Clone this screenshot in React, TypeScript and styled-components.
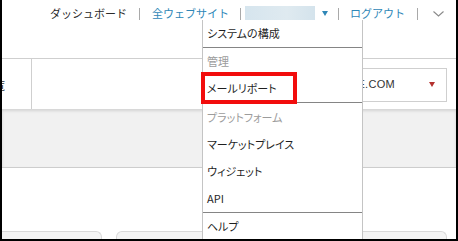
import React from "react";
import styled, { createGlobalStyle } from "styled-components";

const Global = createGlobalStyle`
  html, body { margin: 0; padding: 0; background: #fff; }
  body { font-family: "Noto Sans CJK JP", "Noto Sans", sans-serif; }
`;

const Frame = styled.div`
  position: relative;
  width: 458px;
  height: 241px;
  box-sizing: border-box;
  border-left: 2px solid #000;
  border-right: 2px solid #000;
  border-bottom: 2px solid #000;
  overflow: hidden;
  display: flex;
  flex-direction: column;
  background: #fff;
`;

const Header = styled.div`
  height: 58px;
  flex: none;
  border-bottom: 1px solid #cfcfcf;
  position: relative;
`;

const Nav = styled.nav`
  height: 26px;
  display: flex;
  align-items: center;
  padding-left: 48px;
  font-size: 11px;
  line-height: 1;
  white-space: nowrap;
`;

const NavText = styled.span<{ $link?: boolean }>`
  color: ${(p) => (p.$link ? "#2f87b7" : "#2b2b2b")};
`;

const Sep = styled.span<{ $l: number; $r: number }>`
  width: 1px;
  height: 12px;
  background: #a9a9a9;
  margin: 1px ${(p) => p.$r}px 0 ${(p) => p.$l}px;
`;

const Blurred = styled.span`
  width: 70px;
  height: 16px;
  margin-top: 2px;
  background: linear-gradient(90deg, #d6e5ee, #dfeaf0 60%, #d4e3ec);
  filter: blur(0.6px);
`;

const Caret = styled.span<{ $color: string }>`
  flex: none;
  width: 0;
  height: 0;
  border-left: 3.5px solid transparent;
  border-right: 3.5px solid transparent;
  border-top: 5px solid ${(p) => p.$color};
`;

const NavCaret = styled(Caret)`
  margin: 0 10px 0 7px;
`;

const Chevron = styled.svg`
  margin-left: 15px;
  margin-top: 1px;
`;

const Menu = styled.div`
  position: absolute;
  left: 200px;
  top: 20px;
  width: 161px;
  height: 240px;
  box-sizing: border-box;
  background: #fff;
  border-left: 1px solid #c4c4c4;
  border-right: 1px solid #c4c4c4;
  z-index: 5;
  font-size: 11px;
  font-feature-settings: "palt";
  line-height: 1;
`;

const MenuItem = styled.div<{ $group?: boolean; $h?: number }>`
  position: relative;
  height: ${(p) => p.$h ?? 27}px;
  display: flex;
  align-items: center;
  padding-left: 4px;
  color: ${(p) => (p.$group ? "#9c9c9c" : "#1f1f1f")};
  white-space: nowrap;
`;

const MenuSep = styled.div`
  height: 1px;
  background: #858585;
`;

const Highlight = styled.div`
  position: absolute;
  left: -2px;
  top: -3px;
  width: 96px;
  height: 32px;
  box-sizing: border-box;
  border: 4px solid #f20d0d;
`;

const Toolbar = styled.div`
  height: 50px;
  flex: none;
  display: flex;
  align-items: flex-start;
`;

const LeftCell = styled.div`
  width: 29px;
  height: 50px;
  border-right: 1px solid #cfcfcf;
  overflow: hidden;
  display: flex;
  align-items: center;
  font-size: 11px;
  color: #333;
`;

const CutText = styled.span`
  margin-left: -8px;
  margin-top: 1px;
  white-space: nowrap;
`;

const Select = styled.div`
  margin: 9px 9px 0 auto;
  width: 147px;
  height: 34px;
  box-sizing: border-box;
  border: 1px solid #cfcfcf;
  display: flex;
  align-items: center;
  padding: 0 11px 2px 10px;
  font-family: "Liberation Sans", Arial, sans-serif;
  font-size: 11px;
  color: #333;
  letter-spacing: 0.3px;
`;

const SelectValue = styled.span`
  flex: 1;
  white-space: nowrap;
  overflow: hidden;
`;

const Band = styled.div`
  height: 58px;
  flex: none;
  background: #f1f1f1;
  border-bottom: 1px solid #cdcdcd;
  box-shadow: inset 0 2px 3px rgba(0, 0, 0, 0.12);
`;

const Cards = styled.div`
  flex: 1;
  display: flex;
  align-items: flex-end;
  gap: 14px;
`;

const Card = styled.div<{ $w: number; $noLeft?: boolean }>`
  width: ${(p) => p.$w}px;
  height: 8px;
  box-sizing: border-box;
  background: #f4f4f4;
  border: 1px solid #d9d9d9;
  border-bottom: none;
  border-left: ${(p) => (p.$noLeft ? "none" : "1px solid #d9d9d9")};
  border-radius: ${(p) => (p.$noLeft ? "0 6px 0 0" : "6px 6px 0 0")};
`;

export default function App() {
  return (
    <>
      <Global />
      <Frame>
        <Header>
          <Nav>
            <NavText>ダッシュボード</NavText>
            <Sep $l={12} $r={12} />
            <NavText $link>全ウェブサイト</NavText>
            <Sep $l={11} $r={4} />
            <Blurred />
            <NavCaret $color="#2f87b7" />
            <Sep $l={0} $r={11} />
            <NavText $link>ログアウト</NavText>
            <Sep $l={12} $r={0} />
            <Chevron width="11" height="6" viewBox="0 0 11 6">
              <path d="M0.5 0.5 L5.5 5 L10.5 0.5" fill="none" stroke="#8a8a8a" strokeWidth="1.1" />
            </Chevron>
          </Nav>
          <Menu>
            <MenuItem>システムの構成</MenuItem>
            <MenuSep />
            <MenuItem $group>管理</MenuItem>
            <MenuItem>
              メールリポート
              <Highlight />
            </MenuItem>
            <MenuSep />
            <MenuItem $group $h={28}>プラットフォーム</MenuItem>
            <MenuItem>マーケットプレイス</MenuItem>
            <MenuItem>ウィジェット</MenuItem>
            <MenuItem>API</MenuItem>
            <MenuSep />
            <MenuItem>ヘルプ</MenuItem>
          </Menu>
        </Header>
        <Toolbar>
          <LeftCell>
            <CutText>覧</CutText>
          </LeftCell>
          <Select>
            <SelectValue>EXAMPLE.COM</SelectValue>
            <Caret $color="#b4312f" />
          </Select>
        </Toolbar>
        <Band />
        <Cards>
          <Card $w={100} $noLeft />
          <Card $w={331} />
        </Cards>
      </Frame>
    </>
  );
}
